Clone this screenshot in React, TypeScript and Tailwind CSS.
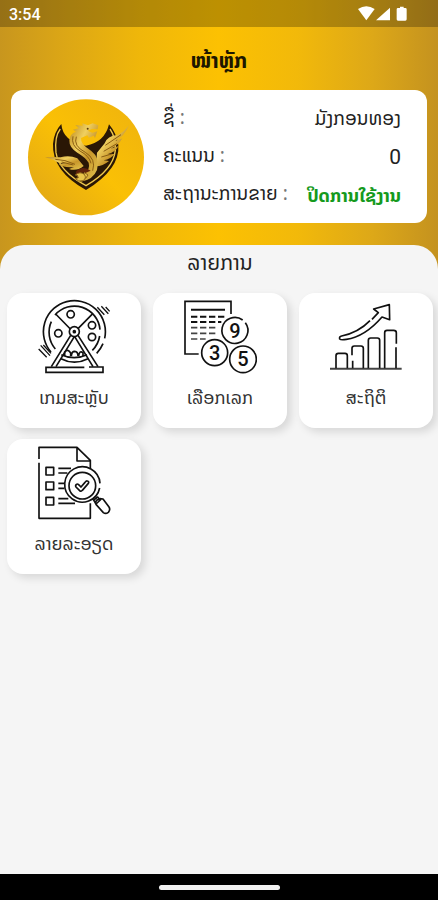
import type { ReactNode } from "react";

const goldSheen =
  "bg-[linear-gradient(90deg,#c8961e_0%,#dba616_14%,#efb70a_32%,#fcc102_50%,#f2b90a_68%,#dda818_85%,#c4921f_100%)]";

function StatusBar() {
  return (
    <div className="flex h-[27px] items-center justify-between bg-black/25 pl-[9px] pr-[30px] text-white">
      <span className="pt-[2px] font-[Roboto,sans-serif] text-base font-medium">3:54</span>
      <svg viewBox="0 0 150 48" className="h-4 w-[50px]" fill="#fff" aria-hidden="true">
        <path d="M0 9Q25-8 50 9L25 43Z" />
        <path d="M96 5V43H54Z" />
        <path d="M126 2h11v4h5q4 0 4 4v30q0 4-4 4h-22q-4 0-4-4V10q0-4 4-4h6Z" />
      </svg>
    </div>
  );
}

function DragonEmblem() {
  return (
    <svg viewBox="0 0 366 366" className="size-[122px] shrink-0" role="img" aria-label="ມັງກອນທອງ">
      <defs>
        <linearGradient id="disc" x1="0" x2="1" y1="1" y2="0">
          <stop offset="0" stopColor="#dda31a" />
          <stop offset=".5" stopColor="#fac005" />
          <stop offset="1" stopColor="#eeb20f" />
        </linearGradient>
        <linearGradient id="scale" x1="0" x2="1" y1="0" y2="1">
          <stop offset="0" stopColor="#b98518" />
          <stop offset=".35" stopColor="#f0d060" />
          <stop offset=".6" stopColor="#c8962a" />
          <stop offset="1" stopColor="#e4c650" />
        </linearGradient>
      </defs>
      <circle cx="183" cy="184" r="174" fill="url(#disc)" />
      <path d="M109 84Q113 137 183 149Q239 139 252 85Q274 111 280 146Q286 219 183 282Q80 224 84 143Q88 106 109 84Z" fill="#2a1705" />
      <path d="M106 99Q88 121 93 170Q101 225 183 269Q265 221 271 163Q273 125 255 99" fill="none" stroke="#efc94c" strokeWidth="4" />
      <path d="M60 184Q84 182 107 184Q132 176 157 187L176 210Q155 227 132 219L147 213Q119 217 101 204L126 203Q99 203 85 191Z" fill="url(#scale)" />
      <path d="M312 87Q298 108 277 117Q247 119 239 142L216 170L213 211Q233 211 252 195L236 193Q258 189 269 174L247 175Q271 169 281 150L257 158Q281 148 292 127L270 135Q299 121 312 87Z" fill="url(#scale)" />
      <path d="M220 88L203 82L189 88L172 82L173 89L151 87L161 97L144 101L153 107Q134 113 133 133Q132 155 157 170Q181 184 191 200Q196 220 179 230Q184 246 167 257Q204 252 216 222Q226 185 198 164Q166 145 168 126L187 118L192 125L206 119L210 126L217 106L202 110L188 104L201 99L218 100Z" fill="url(#scale)" />
      <path d="M154 122Q144 150 181 169Q214 189 203 224M144 121Q137 148 165 165Q193 180 198 202M241 148L288 116M236 166L276 143M229 183L260 174M91 190Q119 190 150 205M110 198L145 207" fill="none" stroke="#8a5d12" strokeWidth="3" />
      <path d="M161 220Q179 211 197 224L181 231Q164 226 155 237Q147 230 161 220Z" fill="#5e220c" />
      <path d="M151 237Q165 225 178 235Q186 247 174 254Q160 259 151 248L160 245L157 238ZM177 229L189 237L182 247" fill="#e8c44b" stroke="#8c6419" strokeWidth="3" />
      <circle cx="188" cy="98" r="3" fill="#5e3b08" />
    </svg>
  );
}

function WheelIcon() {
  return (
    <svg viewBox="108 40 222 225" className="h-[75px] w-[74px]" fill="none" stroke="#111" strokeWidth="5" aria-hidden="true">
      <path d="M150 199A93 93 0 1 1 311 158M306 174A93 93 0 0 1 287 203" />
      <path d="M151 108A77 77 0 0 0 163 190M162 88A77 77 0 0 1 297 132M296 151A77 77 0 0 1 274 194M181 207Q219 225 258 207M180 219Q220 240 261 219" />
      <circle cx="220" cy="138" r="15" />
      <circle cx="220" cy="138" r="3" fill="#111" />
      <path d="M208 130L164 85M231 129L276 83" />
      <circle cx="209" cy="86" r="11" /><circle cx="172" cy="143" r="11" />
      <circle cx="273" cy="119" r="11" /><circle cx="273" cy="154" r="11" />
      <path d="M209 149L151 243M220 153L165 243M231 149L291 243M221 153L276 243" />
      <path d="M191 211V199Q201 188 209 202V212M211 211Q212 197 221 197Q231 198 231 211M233 211Q235 193 246 201V211" />
      <path d="M250 245H135V260H306V244H264" />
      <path d="M289 65L310 87M301 62L322 84M314 64L326 77M113 190L137 215M119 179L147 210M127 178L150 203" strokeWidth="4" />
    </svg>
  );
}

function NumbersIcon() {
  return (
    <svg viewBox="111 40 222 225" className="h-[75px] w-[74px]" fill="none" stroke="#111" strokeWidth="5" aria-hidden="true">
      <path d="M255 85V47H117V205H158" />
      <path d="M135 72H237" strokeWidth="6" />
      <path d="M135 93H238M135 109H226" strokeDasharray="19 8" strokeWidth="6" />
      <path d="M135 126H216M135 143H211M135 160H179" strokeDasharray="19 8" stroke="#444" />
      <path d="M290 103A39 39 0 1 0 298 111" />
      <circle cx="206" cy="201" r="39" /><circle cx="291" cy="221" r="40" />
      <g fill="#111" stroke="none" className="font-[Roboto,sans-serif] text-[60px] font-medium" textAnchor="middle">
        <text x="267" y="156">9</text><text x="206" y="222">3</text><text x="291" y="242">5</text>
      </g>
    </svg>
  );
}

function ChartIcon() {
  return (
    <svg viewBox="115 40 222 225" className="h-[75px] w-[74px]" fill="none" stroke="#111" strokeWidth="5" strokeLinejoin="round" aria-hidden="true">
      <path d="M118 249H333" stroke="#444" strokeWidth="6" />
      <path d="M136 248V210Q136 203 143 203H163Q170 203 170 210V248M184 209V188Q184 181 191 181H211Q218 181 218 188V248M186 225V248M233 248V164Q233 157 240 157H260Q267 157 267 164V248M282 248V141Q282 134 289 134H309Q317 134 317 141V174M316 185V248" />
      <path d="M238 105Q203 141 153 151Q145 153 147 160Q151 164 167 161Q223 153 274 94L297 102L296 57L249 70L263 81L244 101" />
    </svg>
  );
}

function DetailsIcon() {
  return (
    <svg viewBox="109 42 222 225" className="h-[75px] w-[74px]" fill="none" stroke="#111" strokeWidth="5" strokeLinejoin="round" aria-hidden="true">
      <path d="M115 84V49H229L269 88V113M115 95V262H269V217M229 50V90H268" />
      <rect x="136" y="109" width="23" height="23" /><rect x="136" y="153" width="23" height="23" /><rect x="136" y="199" width="23" height="23" />
      <path d="M173 112H211M173 126H200M173 157H192M173 172H191M173 203H203M173 217H223" />
      <path d="M298 157A53 53 0 1 0 297 171" />
      <circle cx="245" cy="164" r="40" />
      <path d="M228 160Q223 163 226 168L237 179Q241 183 245 178L263 157Q266 151 260 150Q257 149 253 154L241 168L233 160Q230 158 228 160ZM279 207L291 198L299 207L286 219ZM286 220Q282 214 288 208L298 203L307 204L325 228Q330 236 323 244Q315 250 308 245Z" />
    </svg>
  );
}

function InfoRow({ label, children }: { label: string; children: ReactNode }) {
  return (
    <div className="flex h-[38px] items-center justify-between">
      <dt className="whitespace-nowrap text-[19px]">
        {label} <span className="text-[#777]">:</span>
      </dt>
      <dd className="whitespace-nowrap pt-[2px]">{children}</dd>
    </div>
  );
}

const menu = [
  { label: "ເກມສະຫຼັບ", Icon: WheelIcon },
  { label: "ເລືອກເລກ", Icon: NumbersIcon },
  { label: "ສະຖິຕິ", Icon: ChartIcon },
  { label: "ລາຍລະອຽດ", Icon: DetailsIcon },
];

export default function App() {
  return (
    <div className={`flex min-h-screen flex-col font-['Noto_Sans_Lao','DejaVu_Sans',sans-serif] text-[#222] ${goldSheen}`}>
      <StatusBar />
      <header className="px-[11px] pb-[22px]">
        <h1 className="flex h-[63px] items-center justify-center pt-1 text-[21px] font-bold text-[#1d1700]">ໜ້າຫຼັກ</h1>
        <section className="flex h-[133px] items-center rounded-xl bg-white pl-[14px] pr-[26px]">
          <DragonEmblem />
          <dl className="ml-4 flex-1">
            <InfoRow label="ຊື່"><span className="text-[19px]">ມັງກອນທອງ</span></InfoRow>
            <InfoRow label="ຄະແນນ"><span className="font-[Roboto,sans-serif] text-[21px]">0</span></InfoRow>
            <InfoRow label="ສະຖານະການຂາຍ"><span className="text-lg font-bold text-[#159a1d]">ປິດການໃຊ້ງານ</span></InfoRow>
          </dl>
        </section>
      </header>
      <main className="flex-1 rounded-t-[24px] bg-[#f5f5f5] pl-[7px] pr-[5px]">
        <h2 className="flex h-12 items-start justify-center pt-[2px] text-[21px]">ລາຍການ</h2>
        <nav className="grid grid-cols-3 gap-x-3 gap-y-[11px]">
          {menu.map(({ label, Icon }) => (
            <button key={label} type="button" className="flex h-[135px] flex-col items-center rounded-2xl bg-white pt-[6px] shadow-[4px_4px_8px_rgba(0,0,0,0.12)]">
              <Icon />
              <span className="mt-[10px] whitespace-nowrap text-lg text-[#333]">{label}</span>
            </button>
          ))}
        </nav>
      </main>
      <footer className="flex h-[26px] items-center justify-center bg-black">
        <div className="h-[5px] w-[121px] rounded-full bg-[#f2f2f2]" />
      </footer>
    </div>
  );
}
